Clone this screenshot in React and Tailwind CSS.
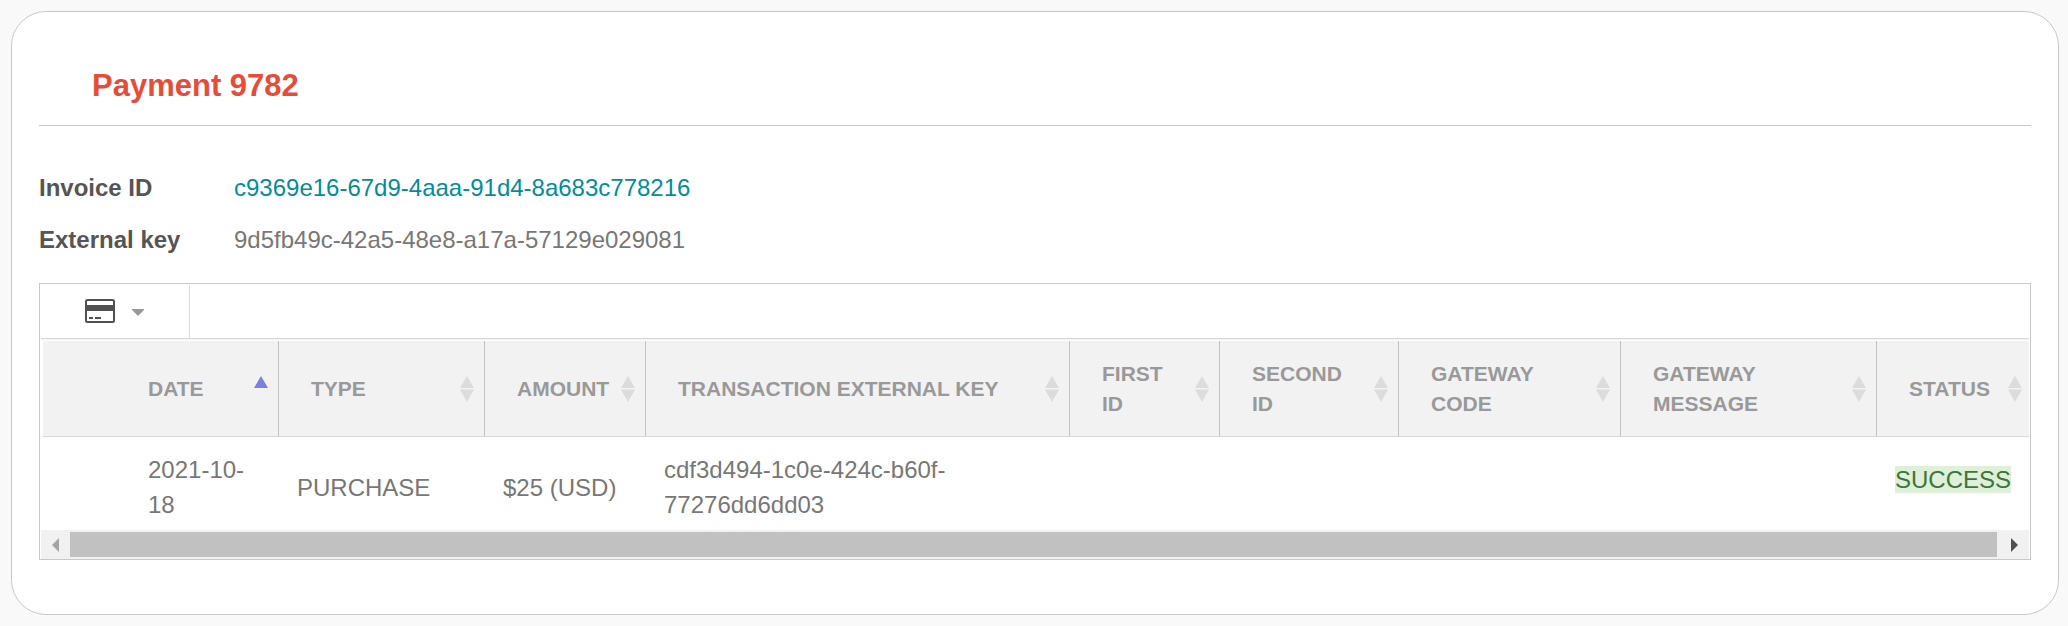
import React from "react";

const columns = [
  { label: "Date", sorted: true },
  { label: "Type" },
  { label: "Amount" },
  { label: "Transaction external key" },
  { label: "First ID", narrow: true },
  { label: "Second ID", narrow: true },
  { label: "Gateway code", narrow: true },
  { label: "Gateway message", narrow: true },
  { label: "Status" },
];

function SortIcon({ sorted, last }) {
  return (
    <svg
      className={"absolute top-1/2 -mt-[14px] " + (last ? "right-[7px]" : "right-[10px]")}
      width="14"
      height="28"
      viewBox="0 0 14 28"
      aria-hidden="true"
    >
      <path d="M7 1 L14 13 H0 Z" fill={sorted ? "#7b80df" : "#dcdcdc"} />
      {!sorted && <path d="M0 14.5 H14 L7 27 Z" fill="#dcdcdc" />}
    </svg>
  );
}

function CardIcon() {
  return (
    <svg width="30" height="24" viewBox="0 0 30 24" aria-hidden="true">
      <rect x="1" y="1" width="28" height="22" rx="1.5" fill="#fff" stroke="#505050" strokeWidth="2" />
      <rect x="1" y="6" width="28" height="6" fill="#505050" />
      <rect x="4" y="18" width="4" height="2" fill="#505050" />
      <rect x="10" y="18" width="6" height="2" fill="#505050" />
    </svg>
  );
}

function HeaderCell({ column, first, last }) {
  return (
    <th
      scope="col"
      aria-sort={column.sorted ? "ascending" : undefined}
      className={
        "relative h-24 border-b border-b-[#d8d8d8] bg-[#f2f2f2] py-4 pr-8 text-left align-middle text-[21px] leading-[30px] font-bold text-[#999] uppercase " +
        (first ? "pl-[105px] " : "pl-8 ") +
        (last ? "" : "border-r border-r-[#c4c4c4]")
      }
    >
      <button type="button" className="block text-left font-bold whitespace-nowrap uppercase">
        {column.narrow
          ? column.label.split(" ").map((word, i) => (
              <React.Fragment key={word}>
                {i > 0 && <br />}
                {word}
              </React.Fragment>
            ))
          : column.label}
      </button>
      <SortIcon sorted={column.sorted} last={last} />
    </th>
  );
}

export default function App() {
  return (
    <div className="flex min-h-screen flex-col bg-[#f9f9f9] py-[11px] pr-[9px] pl-[11px] font-['Liberation_Sans',Arial,sans-serif] text-2xl text-[#777]">
      <main className="flex-1 rounded-[35px] border border-[#c8c8c8] bg-white px-[27px] pb-[54px]">
        <header className="border-b border-[#c8c8c8] pt-[54px] pb-[19px] pl-[53px]">
          <h1 className="text-[31px] leading-10 font-bold text-[#e64c38]">Payment 9782</h1>
        </header>

        <dl className="mt-9 grid grid-cols-[195px_1fr] leading-[52px]">
          <dt className="font-bold text-[#555]">Invoice ID</dt>
          <dd>
            <a href="#invoice" className="text-[#038c99]">
              c9369e16-67d9-4aaa-91d4-8a683c778216
            </a>
          </dd>
          <dt className="font-bold text-[#555]">External key</dt>
          <dd>9d5fb49c-42a5-48e8-a17a-57129e029081</dd>
        </dl>

        <section className="mt-[17px] border border-[#c8c8c8] px-px pt-px">
          <div className="flex h-[54px] border-b border-[#d8d8d8]">
            <button
              type="button"
              aria-label="Payment actions"
              className="flex w-[149px] items-center gap-[17px] border-r border-[#ddd] pb-px pl-[44px]"
            >
              <CardIcon />
              <svg className="mt-[3px]" width="12" height="7" viewBox="0 0 12 7" aria-hidden="true">
                <path d="M0 0 H12 V1 L6 7 L0 1 Z" fill="#999" />
              </svg>
            </button>
          </div>

          <div className="border-t border-[#f3f3f3] pt-px pl-[2px]">
            <table className="w-full table-fixed border-separate border-spacing-0">
              <colgroup>
                <col className="w-[236px]" />
                <col className="w-[206px]" />
                <col className="w-[161px]" />
                <col className="w-[424px]" />
                <col className="w-[150px]" />
                <col className="w-[179px]" />
                <col className="w-[222px]" />
                <col className="w-[256px]" />
                <col className="w-[152px]" />
              </colgroup>
              <thead>
                <tr>
                  {columns.map((column, i) => (
                    <HeaderCell
                      key={column.label}
                      column={column}
                      first={i === 0}
                      last={i === columns.length - 1}
                    />
                  ))}
                </tr>
              </thead>
              <tbody className="leading-[35px]">
                <tr>
                  <td className="pt-[15px] pr-4 pb-2 pl-[105px]">2021-10-18</td>
                  <td className="pt-[15px] pb-2 pl-[18px]">PURCHASE</td>
                  <td className="pt-[15px] pb-2 pl-[18px]">$25 (USD)</td>
                  <td className="pt-[15px] pr-24 pb-2 pl-[18px]">cdf3d494-1c0e-424c-b60f-77276dd6dd03</td>
                  <td />
                  <td />
                  <td />
                  <td />
                  <td className="pt-[15px] pb-6 pl-[18px]">
                    <span className="bg-[#dff0d8] text-[#3c763d]">SUCCESS</span>
                  </td>
                </tr>
              </tbody>
            </table>
          </div>

          <div className="flex h-[29px] items-stretch bg-[#f1f1f1] py-[2px]">
            <button type="button" aria-label="Scroll left" className="flex w-[29px] items-center pl-[11px]">
              <svg width="7" height="14" viewBox="0 0 7 14" aria-hidden="true">
                <path d="M7 0 V14 L0 7 Z" fill="#a3a3a3" />
              </svg>
            </button>
            <div className="flex-1 bg-[#c1c1c1]" />
            <button type="button" aria-label="Scroll right" className="flex w-8 items-center pl-[14px]">
              <svg width="7" height="14" viewBox="0 0 7 14" aria-hidden="true">
                <path d="M0 0 V14 L7 7 Z" fill="#505050" />
              </svg>
            </button>
          </div>
        </section>
      </main>
    </div>
  );
}
